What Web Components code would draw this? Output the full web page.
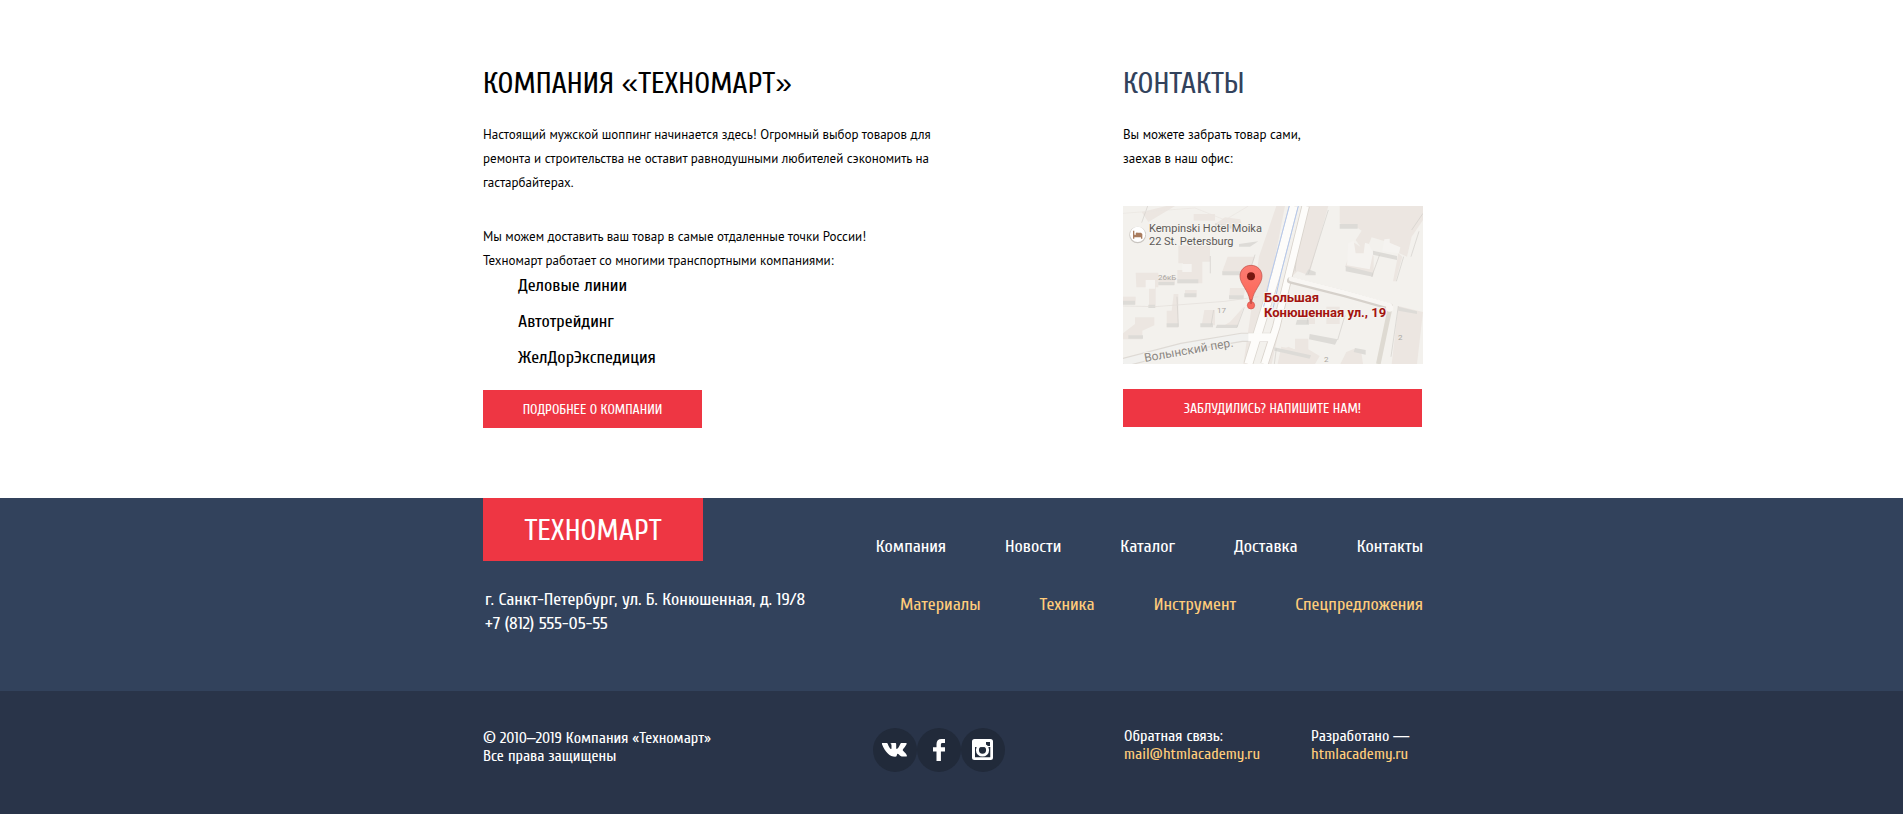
<!DOCTYPE html>
<html lang="ru">
<head>
<meta charset="utf-8">
<meta name="viewport" content="width=device-width, initial-scale=1">
<title>Техномарт</title>
<style>
  :root {
    --red: #ee3643;
    --navy: #32425c;
    --navy-dark: #293449;
    --navy-deep: #212a3a;
    --sand: #ffcc7a;
    --wrap: 943px;
    --punctuation: "Liberation Sans", Arial, sans-serif;
  }
  body {
    margin: 0;
    min-height: 100vh;
    display: flex;
    flex-direction: column;
    background: #fff;
    color: #000;
    font-family: Cuprum, "Open Sans Condensed", "Roboto Condensed", Roboto, sans-serif;
    font-size: 18px;
    line-height: 24px;
  }
  footer { display: flex; flex-direction: column; flex: 1; }
  h2 { margin: 0; font: inherit; }
  .mark { font-family: var(--punctuation); line-height: 1; }
</style>
</head>
<body>
<main>
  <tm-columns>
    <tm-article>
      <h2 slot="heading">Компания <span class="mark">«</span>Техномарт<span class="mark">»</span></h2>
      <tm-text>
        <p>Настоящий мужской шоппинг начинается здесь! Огромный выбор товаров для ремонта и строительства не оставит равнодушными любителей сэкономить на гастарбайтерах.</p>
        <p>Мы можем доставить ваш товар в самые отдаленные точки России!<br>Техномарт работает со многими транспортными компаниями:</p>
      </tm-text>
      <tm-carriers></tm-carriers>
      <tm-button>Подробнее о компании</tm-button>
    </tm-article>
    <tm-article slot="side" tone="navy">
      <h2 slot="heading">Контакты</h2>
      <tm-text>
        <p>Вы можете забрать товар сами,<br>заехав в наш офис:</p>
      </tm-text>
      <tm-map></tm-map>
      <tm-button wide>Заблудились? Напишите нам!</tm-button>
    </tm-article>
  </tm-columns>
</main>
<footer>
  <tm-footer-top></tm-footer-top>
  <tm-footer-bottom></tm-footer-bottom>
</footer>

<script>
const define = (name, html) => {
  const template = document.createElement('template');
  template.innerHTML = html;
  customElements.define(name, class extends HTMLElement {
    constructor() {
      super();
      this.attachShadow({ mode: 'open' }).append(template.content.cloneNode(true));
    }
  });
};

const wrap = `.wrap { box-sizing: border-box; max-width: var(--wrap); margin: 0 auto; padding-left: 3px; }`;

define('tm-columns', `
<style>
  :host { display: block; padding: 66px 0 70px; }
  ${wrap}
  .wrap { display: grid; grid-template-columns: minmax(0, 460px) 300px; justify-content: space-between; }
</style>
<div class="wrap"><slot></slot><slot name="side"></slot></div>`);

define('tm-article', `
<style>
  :host { display: block; }
  :host([tone="navy"]) header { color: var(--navy); }
  header { margin-bottom: 21px; font-size: 30px; line-height: 36px; text-transform: uppercase; }
</style>
<section><header><slot name="heading"></slot></header><slot></slot></section>`);

define('tm-text', `
<style>
  :host { display: block; font-family: "PT Sans", "Noto Sans", sans-serif; font-size: 13px; line-height: 24px; }
  ::slotted(p) { margin: 0 0 30px; }
  ::slotted(p:last-child) { margin-bottom: 0; }
</style>
<slot></slot>`);

define('tm-carriers', `
<style>
  :host { display: block; margin-bottom: 20px; }
  ul { list-style: none; margin: 0; padding: 1px 0 0 35px; display: grid; gap: 12px; }
</style>
<ul><li>Деловые линии</li><li>Автотрейдинг</li><li>ЖелДорЭкспедиция</li></ul>`);

define('tm-button', `
<style>
  :host { display: block; }
  button {
    display: block; width: 219px; max-width: 100%; height: 38px; padding: 2px 0 0; border: 0;
    background: var(--red); color: #fff; cursor: pointer;
    font: inherit; font-size: 14px; line-height: 18px; text-transform: uppercase;
  }
  :host([wide]) button { width: 299px; }
</style>
<button type="button"><slot></slot></button>`);

define('tm-map', `
<style>
  :host { display: block; margin: 35px 0 25px; }
  svg { display: block; width: 100%; }
  text { font-family: Roboto, sans-serif; }
  .halo { paint-order: stroke; stroke: #f5f3ef; stroke-width: 2px; stroke-linejoin: round; }
</style>
<svg viewBox="0 0 300 158" role="img" aria-label="Большая Конюшенная ул., 19">
  <defs>
    <linearGradient id="pin" x1="0" y1="0" x2="0" y2="1"><stop offset="0" stop-color="#fb7c72"/><stop offset="1" stop-color="#fd6354"/></linearGradient>
  </defs>
  <rect width="300" height="158" fill="#f3f1ed"/>
  <g transform="scale(.33333) translate(-24 -18)">
    <!-- building shades -->
    <g fill="#ece6e1">
      <path d="M190 136H285V185H262V250H187V210H204V190H190Z"/>
      <path d="M338 170H420L400 224H322V214Z"/>
      <path d="M62 218H130V262H122V324H102V262H64Z"/>
      <path d="M130 232H180V254H130Z"/>
      <path d="M210 270H245V290H210Z"/>
      <path d="M176 282H190V382H155V332H170Z"/>
      <path d="M24 290H62V314H24Z"/>
      <path d="M24 400L60 372V352H118V376L82 392V418H24Z"/>
      <path d="M268 330H300V376H260Z"/>
      <path d="M320 380L345 366L385 322L366 382H310Z"/>
      <path d="M345 264H392L384 296H342Z"/>
      <path d="M236 42H300V62H236Z"/>
      <path d="M80 36L154 18H180L100 66Z"/>
      <path d="M330 52L376 58L384 84L300 72Z"/>
      <path d="M432 170L484 18H510L440 380L410 492H385Z"/>
      <path d="M560 18H640L582 226L548 214L528 232L470 492H448Z"/>
      <path d="M674 18H924V60L890 110L876 170L836 152L824 128L770 112L750 160L722 120L740 92L720 78H690L674 70Z"/>
      <path d="M690 200L718 128L776 168V226Z"/>
      <path d="M850 160L862 170L842 244H834Z"/>
      <path d="M850 318L924 336L906 492H830Z"/>
      <path d="M634 320H674V372H634ZM570 330H600V372H546Z"/>
      <path d="M694 456L718 446L738 450L744 492H676ZM540 416H580V448L614 468L600 492L500 470L498 440L540 448Z"/>
      <path d="M496 452L520 440L600 474V492H488Z"/>
    </g>
    <!-- building fronts, seen from the south -->
    <g fill="#dddbd7">
      <path d="M187 238H250V250H187ZM322 214H404L400 226H322ZM130 246H178V256H130ZM208 280H244V292H208ZM24 302H60V314H24Z"/>
      <path d="M100 314H120V324H100ZM155 370H190V382H155ZM40 406H84V416H40ZM306 374H370L366 384H302ZM342 286H386V298H342ZM256 370H294V382H256Z"/>
      <path d="M300 70L382 82V90L300 80ZM430 124L405 140H372V132Z"/>
      <path d="M674 72H728V86H674ZM692 198L774 218V230L692 214ZM774 152L846 168V180L774 164ZM580 208L602 216V226H570Z"/>
      <path d="M584 402L668 418L660 434L582 418ZM546 360H582V374H542ZM720 444L752 450V464L716 456ZM478 442L588 466L584 476L478 452Z"/>
      <path d="M850 320L906 334V342L850 332Z"/>
    </g>
    <!-- courtyards -->
    <g fill="#f5f3f0">
      <path d="M202 192H230V216H202ZM92 240H120V266H92Z"/>
      <path d="M700 130L716 122L722 160H746L750 128L762 132L774 160L764 208L696 196Z"/>
      <path d="M808 118L824 116V128L856 142L852 160L802 154Z"/>
    </g>
    <g fill="none" stroke="#d2cfca" stroke-width="2">
      <path d="M98 18L80 68M286 168V220M420 164L402 222M186 290L190 380M388 322L366 382M640 30L580 222M556 68L540 214M770 230L794 164M844 244L866 170M912 94L888 170M850 318L828 470M690 346L668 420M582 330L576 372M296 330L288 376M484 446L478 492M924 40L890 90"/>
      <path d="M24 318L120 320L330 304L430 290" stroke="#e2ded9"/>
      <path d="M24 40L240 24L330 60L400 18" stroke="#eae6e1"/>
    </g>
    <!-- streets -->
    <g fill="none" stroke-linecap="butt">
      <path d="M24 488L200 442L380 412H480" stroke="#dedad5" stroke-width="28"/>
      <path d="M24 488L200 442L380 412H480" stroke="#f1f1ef" stroke-width="21"/>
      <path d="M536 18L484 220L400 492" stroke="#dcd7d0" stroke-width="29"/>
      <path d="M536 18L484 220L400 492" stroke="#fdfcfa" stroke-width="24"/>
      <path d="M523 18L464 240L446 320M550 18L498 220L474 326" stroke="#b4c8ee" stroke-width="3"/>
      <path d="M572 18L520 230L484 380L448 492" stroke="#d9d3cc" stroke-width="25"/>
      <path d="M572 18L520 230L484 380L448 492" stroke="#fdfcfa" stroke-width="20"/>
      <path d="M400 412H478" stroke="#fdfcfa" stroke-width="24"/>
      <path d="M526 241L690 282L824 320" stroke="#d6d1cb" stroke-width="20" stroke-linecap="round"/>
      <path d="M528 237L690 278L824 316" stroke="#f8f6f3" stroke-width="14" stroke-linecap="round"/>
      <path d="M824 330L790 492" stroke="#dedad2" stroke-width="14"/>
      <circle cx="824" cy="324" r="11" fill="#f8f6f3"/>
    </g>
    <!-- hotel badge -->
    <circle cx="68" cy="105" r="25" fill="#c9c5c0"/>
    <circle cx="68" cy="103" r="23" fill="#fff"/>
    <path d="M54 92h4v12h5a4 4 0 1 1 6 0v-6h9l4 4v14h-4v-4H58v4h-4z" fill="#a97c5f"/>
    <!-- pin -->
    <path d="M408 196C389 196 375 210 375 229C375 252 400 270 405 302V315H411V302C416 270 441 252 441 229C441 210 427 196 408 196Z" fill="url(#pin)" stroke="#bd4a42" stroke-width="2"/>
    <circle cx="408" cy="229" r="12" fill="#75170f"/>
    <circle cx="408" cy="316" r="11" fill="#f8695e" stroke="#cf5048" stroke-width="2"/>
    <path d="M406 298H410V312H406Z" fill="#c04a42"/>
  </g>
  <g font-size="11" fill="#5d5a57">
    <text class="halo" x="26" y="26">Kempinski Hotel Moika</text>
    <text class="halo" x="26" y="39">22 St. Petersburg</text>
  </g>
  <g font-size="13" font-weight="700" fill="#a31410">
    <text class="halo" x="141" y="96">Большая</text>
    <text class="halo" x="141" y="111">Конюшенная ул., 19</text>
  </g>
  <g font-size="8" fill="#aaa6a1">
    <text x="35" y="74">26кБ</text>
    <text x="94" y="107">17</text>
    <text x="275" y="134">2</text>
    <text x="201" y="156">2</text>
  </g>
  <text class="halo" font-size="12" fill="#8a8682" transform="translate(22 156) rotate(-10)">Волынский пер.</text>
</svg>`);

define('tm-footer-top', `
<style>
  :host { display: block; background: var(--navy); color: #fff; }
  ${wrap}
  .wrap { display: flex; justify-content: space-between; min-height: 193px; }
  a { color: inherit; text-decoration: none; }
  .logo {
    display: block; width: 220px; margin-bottom: 27px; padding-top: 2px;
    background: var(--red); font-size: 30px; line-height: 61px; text-align: center; text-transform: uppercase;
  }
  address { padding-left: 2px; font-style: normal; }
  nav { padding-top: 37px; }
  ul { list-style: none; display: flex; justify-content: flex-end; gap: 59px; margin: 0 0 34px; padding: 0; }
  .goods { color: var(--sand); }
</style>
<div class="wrap">
  <div>
    <a class="logo" href="#home">Техномарт</a>
    <address>г. Санкт-Петербург, ул. Б. Конюшенная, д. 19/8<br><a href="tel:+78125550555">+7 (812) 555-05-55</a></address>
  </div>
  <nav>
    <ul>
      <li><a href="#company">Компания</a></li><li><a href="#news">Новости</a></li><li><a href="#catalog">Каталог</a></li><li><a href="#delivery">Доставка</a></li><li><a href="#contacts">Контакты</a></li>
    </ul>
    <ul class="goods">
      <li><a href="#materials">Материалы</a></li><li><a href="#machines">Техника</a></li><li><a href="#tools">Инструмент</a></li><li><a href="#offers">Спецпредложения</a></li>
    </ul>
  </nav>
</div>`);

define('tm-social', `
<style>
  :host { display: flex; }
  a { display: block; width: 44px; height: 44px; border-radius: 50%; background: var(--navy-deep); }
  svg { display: block; fill: #fff; }
</style>
<a href="#vk" aria-label="ВКонтакте"><svg width="44" height="44" viewBox="0 0 44 44"><path d="M9.500 15h4c.7 0 1 .3 1.300 1 .8 2.300 2.200 5 3.100 5 .5 0 .6-.5.6-1.500v-2c0-1.300-.5-1.600-1.200-1.800.4-.5 1.200-.7 2.500-.7h2.200c.9 0 1.200.4 1.200 1.400v3.800c0 .6.300.8.600.8.800 0 2.500-2.500 3.500-5 .3-.7.600-1 1.400-1h4c.9 0 1.100.5.900 1.100-.5 1.700-3.900 5.400-3.900 6 0 .8 4.200 4 4.200 5.600 0 .6-.5.9-1.200.9h-4c-1.500 0-2.700-2.800-4-2.800-.9 0-.7 1.800-1.200 2.500-.3.300-.7.400-1.300.4-5.400 0-9.800-4-13.200-12.400-.2-.7-.1-1.300.5-1.300z"/></svg></a>
<a href="#facebook" aria-label="Facebook"><svg width="44" height="44" viewBox="0 0 44 44"><path d="M19.500 33v-9.500H16v-4.200h3.500v-3c0-3.600 1.800-5.300 5-5.300H28v4h-2.400c-1.300 0-1.700.5-1.700 1.600v2.700H28v4.200h-4.100V33z"/></svg></a>
<a href="#instagram" aria-label="Instagram"><svg width="44" height="44" viewBox="0 0 44 44"><path fill-rule="evenodd" d="M13.500 11h16a2.500 2.500 0 0 1 2.500 2.500v16a2.500 2.500 0 0 1-2.500 2.500h-16a2.500 2.500 0 0 1-2.500-2.500v-16a2.500 2.500 0 0 1 2.500-2.500zM25 14v4h4v-4zM14 19v10.300h15.300V19z"/><path fill-rule="evenodd" d="M21.500 15.400a6.600 6.600 0 1 1 0 13.200 6.600 6.600 0 0 1 0-13.200zm0 3.100a3.600 3.600 0 1 0 0 7.200 3.600 3.600 0 0 0 0-7.200z"/><path d="M18 17.500h7.500l-1 1.800h-6z" opacity=".3"/></svg></a>`);

define('tm-footer-bottom', `
<style>
  :host { display: block; flex: 1; background: var(--navy-dark); color: #fff; font-size: 16px; line-height: 18px; }
  ${wrap}
  .wrap { display: grid; grid-template-columns: 390px 251px 187px auto; align-items: start; padding-top: 36px; padding-bottom: 40px; }
  p { margin: 0; }
  .copy { padding-top: 2px; }
  .mark { font-family: var(--punctuation); line-height: 1; }
  tm-social { margin-top: 1px; }
  a { color: var(--sand); text-decoration: none; }
</style>
<div class="wrap">
  <p class="copy">© 2010<span class="mark">–</span>2019 Компания «Техномарт»<br>Все права защищены</p>
  <tm-social></tm-social>
  <p>Обратная связь:<br><a href="mailto:mail@htmlacademy.ru">mail@htmlacademy.ru</a></p>
  <p>Разработано <span class="mark">—</span><br><a href="#htmlacademy">htmlacademy.ru</a></p>
</div>`);
</script>
</body>
</html>
